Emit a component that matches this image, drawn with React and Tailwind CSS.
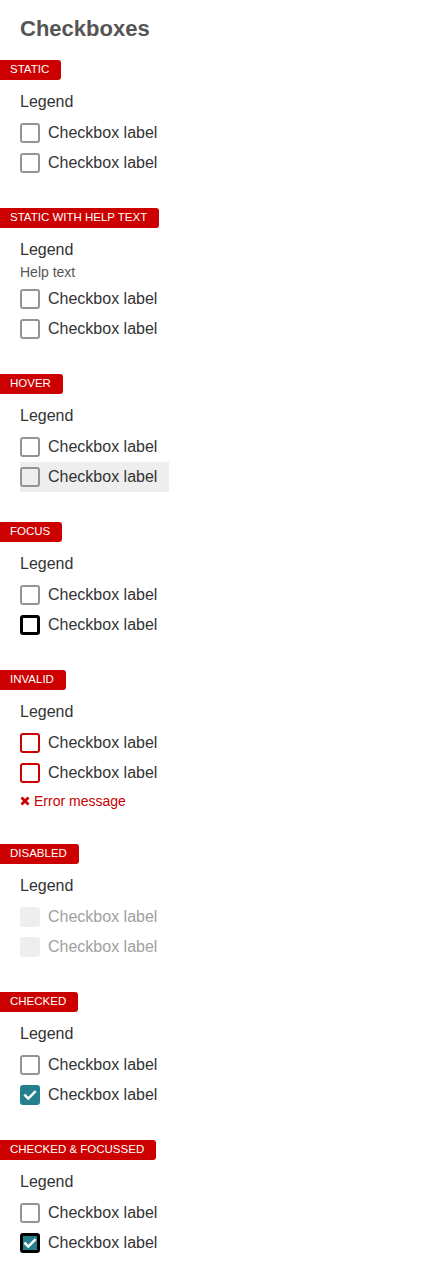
import React from "react";

const Badge = ({ children }) => (
  <div className="flex h-[20px] w-fit items-center rounded-r-[3px] bg-[#cc0000] pl-[10px] pr-[12px] text-[11.5px] leading-none text-white">
    {children}
  </div>
);

const Check = () => (
  <svg viewBox="0 0 16 16" className="h-[14px] w-[14px]" fill="none">
    <path d="M2.5 8.5l3.5 3.5 7.5-7.5" stroke="#fff" strokeWidth="2.8" strokeLinecap="square" />
  </svg>
);

// box variants
const boxStyles = {
  default: "border-2 border-[#949494] bg-white",
  hover: "border-2 border-[#949494] bg-[#eeeeee]",
  focus: "border-[3px] border-black bg-white",
  invalid: "border-2 border-[#cc0000] bg-white",
  disabled: "border-2 border-[#eeeeee] bg-[#eeeeee]",
  checked: "border-2 border-[#23808c] bg-[#23808c]",
  checkedFocus: "border-[3px] border-black bg-[#23808c]",
};

const Row = ({ variant = "default" }) => {
  const checked = variant === "checked" || variant === "checkedFocus";
  return (
    <div
      className={
        "flex h-[30px] w-fit items-center gap-[8px] pr-[12px] " +
        (variant === "hover" ? "bg-[#eeeeee]" : "")
      }
    >
      <span
        className={
          "flex h-[20px] w-[20px] items-center justify-center rounded-[3px] " +
          boxStyles[variant]
        }
      >
        {checked && <Check />}
      </span>
      <span
        className={
          "text-[16px] " + (variant === "disabled" ? "text-[#a0a0a0]" : "text-[#333333]")
        }
      >
        Checkbox label
      </span>
    </div>
  );
};

const Section = ({ title, help, first = "default", second = "default", error }) => (
  <div className="mb-[30px]">
    <Badge>{title}</Badge>
    <div className="mt-[11px] pl-[20px]">
      <div className="h-[22px] text-[16px] leading-[22px] text-[#333333]">Legend</div>
      {help && (
        <div className="h-[18px] pt-[2px] text-[14px] leading-[18px] text-[#555555]">Help text</div>
      )}
      <div className="mt-[5px]">
        <Row variant={first} />
        <Row variant={second} />
      </div>
      {error && (
        <div className="flex h-[26px] items-center gap-[4px] text-[14px] text-[#cc0000]">
          <svg viewBox="0 0 10 10" className="h-[10px] w-[10px]">
            <path d="M1.5 1.5l7 7M8.5 1.5l-7 7" stroke="#cc0000" strokeWidth="2.8" />
          </svg>
          <span>Error message</span>
        </div>
      )}
    </div>
  </div>
);

export default function App() {
  return (
    <div className="min-h-[1279px] bg-white pt-[15px] font-['Liberation_Sans',Arial,sans-serif]">
      <h1 className="mb-[17px] pl-[20px] text-[22px] font-bold leading-[28px] text-[#555555]">
        Checkboxes
      </h1>
      <Section title="STATIC" />
      <Section title="STATIC WITH HELP TEXT" help />
      <Section title="HOVER" second="hover" />
      <Section title="FOCUS" second="focus" />
      <Section title="INVALID" first="invalid" second="invalid" error />
      <Section title="DISABLED" first="disabled" second="disabled" />
      <Section title="CHECKED" second="checked" />
      <Section title="CHECKED & FOCUSSED" second="checkedFocus" />
    </div>
  );
}
